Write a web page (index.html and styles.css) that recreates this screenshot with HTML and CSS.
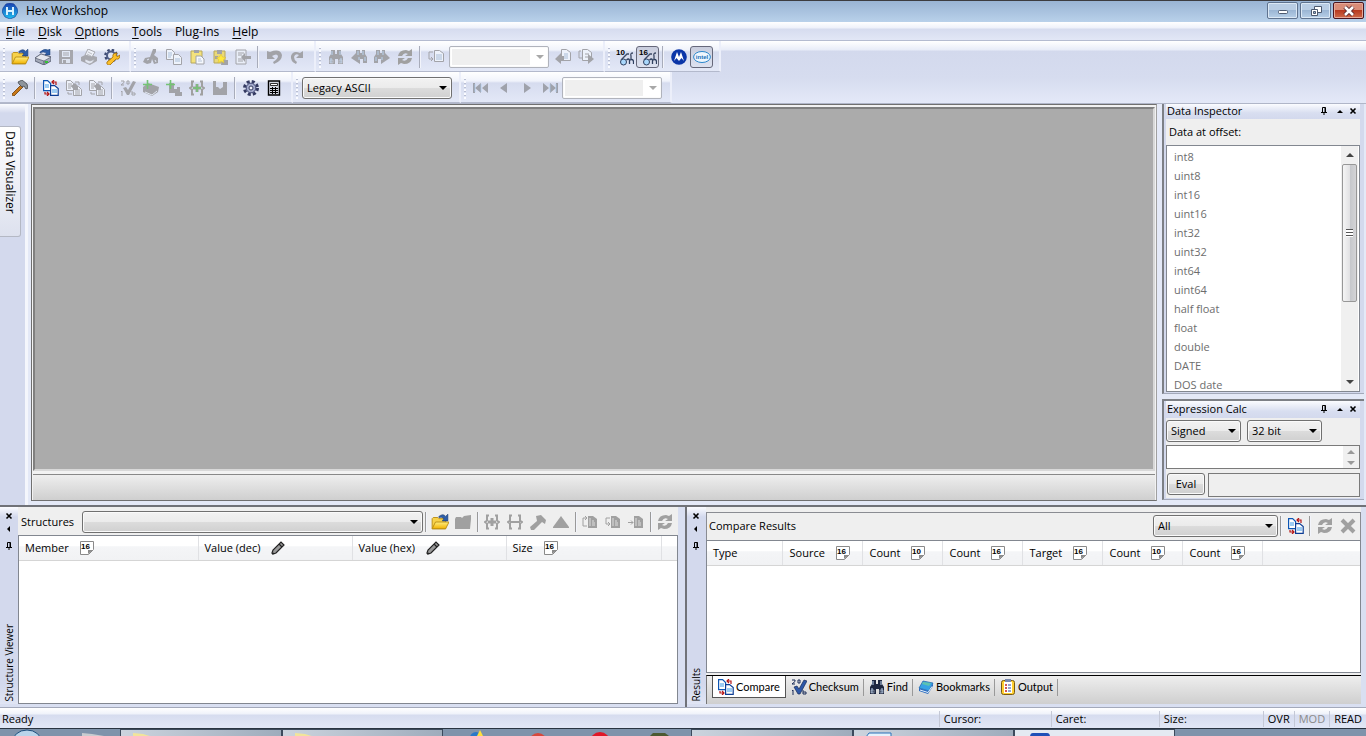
FILE: index.html
```html
<!DOCTYPE html>
<html lang="en">
<head>
<meta charset="utf-8">
<title>Hex Workshop</title>
<link rel="stylesheet" href="styles.css">
</head>
<body>
<svg class="sprite" aria-hidden="true">
  <defs>
    <linearGradient id="gold" x1="0" y1="0" x2="0" y2="1"><stop offset="0" stop-color="#ffee80"/><stop offset="1" stop-color="#f2b200"/></linearGradient>
    <linearGradient id="orb" x1="0" y1="0" x2="0" y2="1"><stop offset="0" stop-color="#1a3fb0"/><stop offset="1" stop-color="#1fc0f0"/></linearGradient>
  </defs>
  <symbol id="i-logo" viewBox="0 0 16 16"><path d="M4 1l4-1 4 1 3 4 1 4-3 5-5 2-5-2-3-5 1-4z" fill="url(#orb)" stroke="#123a94" stroke-width=".6"/><path d="M5 4v8M11 4v8M5 8h6" stroke="#d8f2ff" stroke-width="2" fill="none"/></symbol>
  <symbol id="i-open" viewBox="0 0 16 16"><path d="M1 5l1-1h4l1 1h6v9H1z" fill="#f7d24a" stroke="#b88a10" stroke-width=".8"/><path d="M1 14l3-6h12l-3 6z" fill="url(#gold)" stroke="#b88a10" stroke-width=".8"/><path d="M7 3q4-3 6 0l2-2v6h-5l1.500-2Q10 3 7 4z" fill="#2f5fa8" stroke="#17386e" stroke-width=".5"/></symbol>
  <symbol id="i-disk" viewBox="0 0 16 16"><path d="M0 9l6-4 10 3v4l-7 4-9-4z" fill="#a3a9b8" stroke="#4c5368" stroke-width=".8"/><path d="M0 9l9 3 7-4-10-3z" fill="#e4e7ee" stroke="#565d70" stroke-width=".7"/><path d="M9 12v4" stroke="#565d70"/><rect x="10" y="12" width="3" height="2" fill="#35c435"/><path d="M5 3q4-4 8-2l2-1v6h-5l1.500-2Q8 2 5 4z" fill="#2f5fa8" stroke="#17386e" stroke-width=".5"/></symbol>
  <symbol id="i-save" viewBox="0 0 16 16"><path d="M1 1h14v14H1z" fill="#a6a7ad"/><path d="M4 2h8v6H4z" fill="#e2e9f6"/><path d="M5 4h6M5 6h6" stroke="#a6a7ad"/><path d="M4 10h8v4H4z" fill="#dce2ee"/><path d="M5 11h3v3H5z" fill="#a6a7ad"/></symbol>
  <symbol id="i-print" viewBox="0 0 16 16"><path d="M0 8l6-3 10 3v4l-7 4-9-4z" fill="#a6a7ad"/><path d="M4 6l3-6 7 3-3 5z" fill="#eef1f8" stroke="#a6a7ad"/><path d="M7 3l4 2M6 5l4 2" stroke="#a6a7ad" stroke-width=".7"/><path d="M4 10l5 2 5-2-3 4-3 1-4-2z" fill="#e3e7f1" stroke="#a6a7ad" stroke-width=".7"/></symbol>
  <symbol id="i-prefs" viewBox="0 0 16 16"><circle cx="7" cy="6.500" r="5.600" fill="none" stroke="#3c4a72" stroke-width="2.400" stroke-dasharray="2.400 2"/><circle cx="7" cy="6.500" r="4" fill="#dfe5f2" stroke="#4d5b84" stroke-width="2"/><path d="M3 13l6-5q-1-4 4-4l-1 2.500 1.500 1L16 6q0 5-4 4l-6 6q-4 0-3-3z" fill="#fbc02a" stroke="#a36c00" stroke-width=".8"/></symbol>
  <symbol id="i-cut" viewBox="0 0 16 16"><path d="M10 0h3v3l-2 3 4 3v5l-4 1-2-5-1 4-4 1-4-2 2-4 5-1z" fill="#a2a3a8"/><path d="M4 11l2-1M12 11l1 2" stroke="#e0e6f4"/></symbol>
  <symbol id="i-copy" viewBox="0 0 16 16"><path d="M.5.500h5l3 3v7h-8z" fill="#eef3fb" stroke="#a2a3a8"/><path d="M2 4h4M2 6h4M2 8h3" stroke="#a9bfd9"/><path d="M7.500 5.500h5l3 3v7h-8z" fill="#eef3fb" stroke="#a2a3a8"/><path d="M9 10h5M9 12h5" stroke="#a9bfd9"/></symbol>
  <symbol id="i-paste" viewBox="0 0 16 16"><path d="M2 2h11v12H2z" fill="#f4e27c" stroke="#b6a75c"/><path d="M5 1h5v3H5z" fill="#a2a3a8"/><path d="M7 7h5l3 3v5H7z" fill="#f5f8fd" stroke="#a2a3a8"/><path d="M9 10h3M9 12h4" stroke="#b8c4d8"/></symbol>
  <symbol id="i-pastesp" viewBox="0 0 16 16"><path d="M2 2h11v12H2z" fill="#ead978" stroke="#b6a75c"/><path d="M5 1h5v4H5zM3 7h3v3H3zM10 11h6v5H9z" fill="#a2a3a8"/><path d="M9 5l1.500 3 3.500.5-2.500 2 .5 3.500-3-2-3 2 .7-3.500L4 8.500 7.500 8z" fill="#ffe83c" stroke="#d2b63c" stroke-width=".5"/></symbol>
  <symbol id="i-export" viewBox="0 0 16 16"><path d="M1 1h10v14H1z" fill="#e9eef8" stroke="#a2a3a8"/><path d="M3 4h6M3 6h4M3 10h5M3 12h5" stroke="#a2a3a8"/><path d="M6 8l4-4v3h6v3h-6v3z" fill="#a2a3a8"/></symbol>
  <symbol id="i-undo" viewBox="0 0 16 16"><path d="M1 2v8h8L6 7q5-3 6 0 0 3-5 6l1 2q8-3 8-9-2-7-12-3z" fill="#a2a3a8"/></symbol>
  <symbol id="i-redo" viewBox="0 0 16 16"><path d="M14 2v7H7l3-3Q6 4 5 8q0 3 3 5l-1 2Q1 12 2 7q2-6 9-3z" fill="#a2a3a8"/></symbol>
  <symbol id="i-find" viewBox="0 0 16 16"><path d="M3 1h4v4h2V1h4v4l2 3v7h-5v-5H7v5H1V8l2-3z" fill="currentColor"/><path d="M4 2v4M12 2v4M3 9v5M13 9v5" stroke="#b9d3ef"/><path d="M2 11h3v3H2zM11 11h3v3h-3z" fill="none" stroke="#d5e0f0" stroke-width=".5"/></symbol>
  <symbol id="i-findprev" viewBox="0 0 16 16"><path d="M0 9l5-5V1h4v3h2V1h3v4l2 3v6h-4v-4H9v5z" fill="#a2a3a8"/><path d="M7 2v4M12 2v4M14 8v4M8 8v3" stroke="#b9d3ef"/></symbol>
  <symbol id="i-findnext" viewBox="0 0 16 16"><path d="M16 9l-5-5V1H8v3H6V1H2v4L0 8v6h4v-4h3v5z" fill="#a2a3a8"/><path d="M4 2v4M9 2v4M2 8v4M8 8v3" stroke="#b9d3ef"/></symbol>
  <symbol id="i-refresh" viewBox="0 0 16 16"><path d="M1 7q1-6 8-6l3 1 3-2v7H8l3-2Q7 3 5 7zM15 9q-1 6-8 6l-3-1-3 2V9h7l-3 2q4 2 6-2z" fill="#a0a0a0"/></symbol>
  <symbol id="i-pageleft" viewBox="0 0 16 16"><path d="M6.500 1.500h5l4 3v8h-9z" fill="#edf2fb" stroke="#a2a3a8"/><path d="M8 6h6M8 8h6M8 10h6" stroke="#a8bcd6"/><path d="M5 3H1v7h4M3 8l2 2-2 2" fill="none" stroke="#a2a3a8"/></symbol>
  <symbol id="i-pageprev" viewBox="0 0 16 16"><path d="M6.500.500h5l4 3v8h-9z" fill="#edf2fb" stroke="#a2a3a8"/><path d="M9 5h4M9 7h4M9 9h4" stroke="#a8bcd6"/><path d="M0 10l6-6v3h3v5H6v3z" fill="#a2a3a8"/></symbol>
  <symbol id="i-pagenext" viewBox="0 0 16 16"><path d="M4.500.500h5l4 3v8h-9z" fill="#edf2fb" stroke="#a2a3a8"/><path d="M3 2H1v7h3M7 5h4M7 8h3" stroke="#a2a3a8" fill="none"/><path d="M10 5l6 5-6 5z" fill="#a2a3a8"/></symbol>
  <symbol id="glasses" viewBox="0 0 18 18"><path d="M5 12l6-6h2M17 5q-3 0-2 3v3" fill="none" stroke="#3d4a66" stroke-width="1.300"/><circle cx="7.500" cy="14" r="3" fill="#a9d7fb" stroke="#2f405f"/><path d="M10.500 12q2-2 3 0v4M14 12q4-2 3.500 4" fill="none" stroke="#2f405f" stroke-width="1.300"/></symbol>
  <symbol id="i-moto" viewBox="0 0 16 16"><circle cx="8" cy="8" r="7.800" fill="#0a35a8"/><path d="M3 12L6 3l2 5 2-5 3 9-2.500-3L8 12 5.500 9z" fill="#fff"/></symbol>
  <symbol id="i-hammer" viewBox="0 0 16 16"><path d="M0 14L9 5l2 2-9 9q-2 0-2-2z" fill="#c87818" stroke="#6e3c04" stroke-width=".8"/><path d="M6 2l4-2 5 4 1 4-2 1-2-3-2 1-3-3z" fill="#8d949c" stroke="#42474e" stroke-width=".8"/></symbol>
  <symbol id="i-hammerg" viewBox="0 0 16 16"><path d="M0 13l7-6-1-5 5-1 5 5-1 4-3-2-8 8H1z" fill="#a0a0a0"/></symbol>
  <symbol id="i-compare" viewBox="0 0 16 16"><path d="M.6.600h4l3 3v7h-7z" fill="#fff" stroke="#0c55b4" stroke-width="1.200"/><path d="M2 5h4M2 7h4" stroke="#3c9ae8"/><path d="M7.600 5.600h4l3.600 3v6.800H7.600z" fill="#fff" stroke="#0c3c94" stroke-width="1.200"/><path d="M9 10h5M9 12h5" stroke="#3c9ae8"/><path d="M9 2h4v3M11 0L9 2l2 2M2 12v2h4M4 12l2 2-2 2" fill="none" stroke="#b41616" stroke-width="1.200"/></symbol>
  <symbol id="i-compareg" viewBox="0 0 16 16"><path d="M.5.500h4l3 3v7h-7z" fill="#edf1fa" stroke="#a2a3a8"/><path d="M2 4h4M2 6h4M2 8h3" stroke="#a2a3a8"/><path d="M7.500 6.500h5l3 3v6h-8z" fill="#edf1fa" stroke="#a2a3a8"/><path d="M9 10h5M9 12h5M9 14h5M9 2h4v3M2 12v2h4" fill="none" stroke="#a2a3a8"/><path d="M5 6l4-3 3 3v4H8z" fill="#a2a3a8"/></symbol>
  <symbol id="i-check" viewBox="0 0 16 16"><path d="M3 8l3-1 2 3 5-9 3 1-7 13H7z" fill="#2d58a8" stroke="#1a2c58" stroke-width=".7"/><path d="M1 1h3v1.500L1 5h3M7 1h2v3H7zM1 12l1-1v5M12 11v4h3v-2h-3" fill="none" stroke="#1a2c58" stroke-width="1"/></symbol>
  <symbol id="i-checkg" viewBox="0 0 16 16"><path d="M3 8l3-1 2 3 5-9 3 1-7 13H7z" fill="#a2a3a8"/><path d="M1 1h3v1.500L1 5h3M7 1h2v3H7zM1 12l1-1v5M12 11v4h3v-2h-3" fill="none" stroke="#a2a3a8"/></symbol>
  <symbol id="i-bookadd" viewBox="0 0 16 16"><path d="M0 7l5-4 11 4-1 5-6 4-9-4z" fill="#a2a3a8"/><path d="M2 12l7 3 5-4" fill="none" stroke="#e2e8f4"/><path d="M4.500 0v9M0 4.500h9" stroke="#74c474" stroke-width="1.600"/></symbol>
  <symbol id="i-structadd" viewBox="0 0 16 16"><path d="M3 3h5v6h3V7h3v5h2v4H9v-3H3z" fill="#a2a3a8"/><path d="M4.500 0v9M0 4.500h9" stroke="#74c474" stroke-width="1.600"/></symbol>
  <symbol id="i-brace" viewBox="0 0 16 16"><path d="M5 1.500H3v5L1 8l2 1.500v5h2M11 1.500h2v5L15 8l-2 1.500v5h-2" fill="none" stroke="#a0a0a0" stroke-width="2"/><path d="M4 8h8M8 4v8" stroke="#a0a0a0" stroke-width="3"/></symbol>
  <symbol id="i-bracegreen" viewBox="0 0 16 16"><path d="M5 1.500H3v5L1 8l2 1.500v5h2M11 1.500h2v5L15 8l-2 1.500v5h-2" fill="none" stroke="#a0a0a0" stroke-width="2"/><path d="M4 8h8M8 4v8" stroke="#a0a0a0" stroke-width="3"/><path d="M8 4v8M4 8h8" stroke="#74c474" stroke-width="1.400"/></symbol>
  <symbol id="i-braceminus" viewBox="0 0 16 16"><path d="M5 1.500H3v5L1 8l2 1.500v5h2M11 1.500h2v5L15 8l-2 1.500v5h-2M3 8h10" fill="none" stroke="#a0a0a0" stroke-width="2"/></symbol>
  <symbol id="i-chart" viewBox="0 0 16 16"><path d="M1 1h3v6h2l2 2 3-2V2h4v13H1z" fill="#a2a3a8"/></symbol>
  <symbol id="i-gear" viewBox="0 0 16 16"><circle cx="8" cy="8" r="6.500" fill="none" stroke="#353b62" stroke-width="3" stroke-dasharray="3 2.100"/><circle cx="8" cy="8" r="4.800" fill="#a3aacb" stroke="#454c78" stroke-width="1"/><circle cx="8" cy="8" r="2" fill="#f4f6fc" stroke="#353b62"/></symbol>
  <symbol id="i-calc" viewBox="0 0 16 16"><path d="M2.500 1h11v14h-11z" fill="#d5d8e2" stroke="#000" stroke-width="1.400"/><path d="M4.500 3.500h7v2h-7z" fill="#fff" stroke="#000" stroke-width=".8"/><path d="M4 8.500h8M4 10.500h8M4 12.500h8M6.500 7v7M9.500 7v7" stroke="#000" stroke-width="1"/></symbol>
  <symbol id="i-first" viewBox="0 0 16 12"><path d="M0 1h2v10H0zM2 6l6-5v10zM9 6l6-5v10z" fill="#9fa2ab"/><path d="M2 2v8M8 2v8" stroke="#a9c8ea" stroke-width=".7"/></symbol>
  <symbol id="i-prev" viewBox="0 0 16 12"><path d="M4 6l7-5v10z" fill="#9fa2ab"/></symbol>
  <symbol id="i-next" viewBox="0 0 16 12"><path d="M12 6L5 1v10z" fill="#9fa2ab"/></symbol>
  <symbol id="i-last" viewBox="0 0 16 12"><path d="M14 1h2v10h-2zM14 6L8 1v10zM7 6L1 1v10z" fill="#9fa2ab"/><path d="M14 2v8M8 2v8" stroke="#a9c8ea" stroke-width=".7"/></symbol>
  <symbol id="i-folderg" viewBox="0 0 16 16"><path d="M0 5l1-2h5l1 1 2-2 7-1v4l-1 10H0z" fill="#a0a0a0"/></symbol>
  <symbol id="i-up" viewBox="0 0 16 16"><path d="M8 2l8 11v1H0v-1z" fill="#a0a0a0"/></symbol>
  <symbol id="i-pg1" viewBox="0 0 16 16"><path d="M6 2h5l4 3v9H6z" fill="#a0a0a0"/><path d="M8 4v8M10 7h2M10 9h3M10 11h3" stroke="#efefef" stroke-width=".8" fill="none"/><path d="M5 12H1V4h4M3 2l2 2-2 2" fill="none" stroke="#a0a0a0"/></symbol>
  <symbol id="i-pg2" viewBox="0 0 16 16"><path d="M6 2h5l4 3v9H6z" fill="#a0a0a0"/><path d="M8 4v8M10 7h2M10 9h3M10 11h3" stroke="#efefef" stroke-width=".8" fill="none"/><path d="M5 4H1v6h4M3 8l2 2-2 2" fill="none" stroke="#a0a0a0"/></symbol>
  <symbol id="i-pg3" viewBox="0 0 16 16"><path d="M6 2h5l4 3v9H6z" fill="#a0a0a0"/><path d="M8 4v8M10 7h2M10 9h3M10 11h3" stroke="#efefef" stroke-width=".8" fill="none"/><path d="M0 8.500h5M3 6.500l2 2-2 2" fill="none" stroke="#a0a0a0"/></symbol>
  <symbol id="i-cross" viewBox="0 0 16 16"><path d="M2 2l12 12M14 2L2 14" stroke="#a0a0a0" stroke-width="4"/></symbol>
  <symbol id="i-pencil" viewBox="0 0 14 14"><path d="M1 12l1-3 8-8 3 3-8 8-3 1z" fill="#999" stroke="#222" stroke-width="1.200"/><path d="M8 3l3 3M1 13l2-1" stroke="#222" stroke-width="1.200"/></symbol>
  <symbol id="i-page" viewBox="0 0 14 14"><path d="M.5.500h13v8l-5 5h-8z" fill="#fff" stroke="#8a8a8a"/><path d="M8 13V9h5z" fill="#8a8a8a"/></symbol>
  <symbol id="i-book" viewBox="0 0 16 16"><path d="M1 9l4-7 10 2-4 8z" fill="#37a2e4" stroke="#1b62a8" stroke-width=".7"/><path d="M1 9v3l9 3 5-8V4l-4 8z" fill="#2b6cc0"/><path d="M2 11l8 2.500 4-6" fill="none" stroke="#e8f2fb"/><path d="M5 3l8 1-2 3-7-2z" fill="#5cc3b0"/></symbol>
  <symbol id="i-output" viewBox="0 0 16 16"><rect x="1.500" y="1.500" width="13" height="14" rx="2" fill="#ffcf30" stroke="#7a5a10"/><path d="M4 3h8v11H4z" fill="#fff"/><path d="M5 0h6v3H5z" fill="#7a8ab0"/><path d="M5 6h2M5 9h2M5 12h2" stroke="#c02020" stroke-width="1.500"/><path d="M8 6h3M8 9h3M8 12h3" stroke="#2a4aa0"/></symbol>
  <symbol id="g-x" viewBox="0 0 8 8"><path d="M1.500 1.500l5 5M6.500 1.500l-5 5" stroke="#000" stroke-width="1.600"/></symbol>
  <symbol id="g-up" viewBox="0 0 8 8"><path d="M1 6l3-3 3 3z" fill="#000"/></symbol>
  <symbol id="g-left" viewBox="0 0 8 8"><path d="M2 4l3-3v6z" fill="#000"/></symbol>
  <symbol id="g-pin" viewBox="0 0 8 8"><path d="M2.500 5V.5h3V5M5 .5V5M1 5.500h6M4 5v3" fill="none" stroke="#000" stroke-width="1"/></symbol>
</svg>

<div class="app">
  <header class="title">
    <svg class="ic"><use href="#i-logo"/></svg><h1>Hex Workshop</h1>
    <div class="wins">
      <button class="win" aria-label="Minimize"><svg width="12" height="12"><rect x="1.500" y="5.500" width="9" height="3" rx="1" fill="#fff" stroke="#4d5a70"/></svg></button>
      <button class="win" aria-label="Restore"><svg width="12" height="12"><path d="M4.500 1.500h7v6h-7z" fill="#fff" stroke="#4d5a70"/><path d="M1.500 4.500h6v6h-6z" fill="#fff" stroke="#4d5a70"/><path d="M3.500 6.500h2v2h-2z" fill="#9bb6d4" stroke="#4d5a70"/></svg></button>
      <button class="win close" aria-label="Close"><svg width="12" height="12"><path d="M2 2l8 8M10 2l-8 8" stroke="#5a2a30" stroke-width="4.500"/><path d="M2 2l8 8M10 2l-8 8" stroke="#fff" stroke-width="2.500"/></svg></button>
    </div>
  </header>
  <nav class="menu">
    <button><u>F</u>ile</button><button><u>D</u>isk</button><button><u>O</u>ptions</button><button><u>T</u>ools</button><button>Plug-Ins</button><button><u>H</u>elp</button>
  </nav>
  <div class="bars">
    <div class="row">
      <div class="group"><i class="grip"></i>
        <button class="tb" aria-label="Open"><svg class="ic big"><use href="#i-open"/></svg></button>
        <button class="tb" aria-label="Open drive"><svg class="ic"><use href="#i-disk"/></svg></button>
        <button class="tb" aria-label="Save"><svg class="ic"><use href="#i-save"/></svg></button>
        <button class="tb" aria-label="Print"><svg class="ic"><use href="#i-print"/></svg></button>
        <button class="tb" aria-label="Preferences"><svg class="ic"><use href="#i-prefs"/></svg></button>
      </div>
      <div class="group"><i class="grip"></i>
        <button class="tb" aria-label="Cut"><svg class="ic"><use href="#i-cut"/></svg></button>
        <button class="tb" aria-label="Copy"><svg class="ic"><use href="#i-copy"/></svg></button>
        <button class="tb" aria-label="Paste"><svg class="ic"><use href="#i-paste"/></svg></button>
        <button class="tb" aria-label="Paste special"><svg class="ic"><use href="#i-pastesp"/></svg></button>
        <button class="tb" aria-label="Export"><svg class="ic"><use href="#i-export"/></svg></button>
        <i class="sep"></i>
        <button class="tb" aria-label="Undo"><svg class="ic"><use href="#i-undo"/></svg></button>
        <button class="tb" aria-label="Redo"><svg class="ic"><use href="#i-redo"/></svg></button>
      </div>
      <div class="group"><i class="grip"></i>
        <button class="tb off" aria-label="Find"><svg class="ic"><use href="#i-find"/></svg></button>
        <button class="tb" aria-label="Find previous"><svg class="ic"><use href="#i-findprev"/></svg></button>
        <button class="tb" aria-label="Find next"><svg class="ic"><use href="#i-findnext"/></svg></button>
        <button class="tb" aria-label="Replace"><svg class="ic"><use href="#i-refresh"/></svg></button>
        <i class="sep"></i>
        <button class="tb" aria-label="Go to"><svg class="ic"><use href="#i-pageleft"/></svg></button>
        <span class="combo dead w100"><select aria-label="Go to offset" disabled></select></span>
        <button class="tb" aria-label="Go to previous"><svg class="ic"><use href="#i-pageprev"/></svg></button>
        <button class="tb" aria-label="Go to next"><svg class="ic"><use href="#i-pagenext"/></svg></button>
      </div>
      <div class="group"><i class="grip"></i>
        <button class="tb" aria-label="Decimal"><svg class="ic wide"><use href="#glasses"/><text class="base" x="0" y="7">10</text></svg></button>
        <button class="tb on" aria-label="Hexadecimal"><svg class="ic wide"><use href="#glasses"/><text class="base" x="0" y="7">16</text></svg></button>
        <i class="sep"></i>
        <button class="tb" aria-label="Motorola byte order"><svg class="ic"><use href="#i-moto"/></svg></button>
        <button class="tb on" aria-label="Intel byte order"><svg class="ic wide" viewBox="0 0 18 18"><ellipse cx="9" cy="9" rx="8.400" ry="5.500" fill="#eef6fd" stroke="#2a86cc"/><text class="intel" x="9" y="11" text-anchor="middle">intel</text></svg></button>
      </div>
    </div>
    <div class="row">
      <div class="group"><i class="grip"></i>
        <button class="tb" aria-label="Tools"><svg class="ic"><use href="#i-hammer"/></svg></button>
        <i class="sep"></i>
        <button class="tb" aria-label="Compare files"><svg class="ic"><use href="#i-compare"/></svg></button>
        <button class="tb" aria-label="Previous difference"><svg class="ic"><use href="#i-compareg"/></svg></button>
        <button class="tb" aria-label="Next difference"><svg class="ic"><use href="#i-compareg"/></svg></button>
        <i class="sep"></i>
        <button class="tb" aria-label="Checksum"><svg class="ic"><use href="#i-checkg"/></svg></button>
        <button class="tb" aria-label="Add bookmark"><svg class="ic"><use href="#i-bookadd"/></svg></button>
        <button class="tb" aria-label="Add color map"><svg class="ic"><use href="#i-structadd"/></svg></button>
        <button class="tb" aria-label="Add structure"><svg class="ic"><use href="#i-bracegreen"/></svg></button>
        <button class="tb" aria-label="Distribution"><svg class="ic"><use href="#i-chart"/></svg></button>
        <i class="sep"></i>
        <button class="tb" aria-label="Settings"><svg class="ic"><use href="#i-gear"/></svg></button>
        <button class="tb" aria-label="Calculator"><svg class="ic"><use href="#i-calc"/></svg></button>
      </div>
      <div class="group"><i class="grip"></i>
        <span class="combo w150"><select aria-label="Character set"><option>Legacy ASCII</option></select></span>
      </div>
      <div class="group"><i class="grip"></i>
        <button class="tb" aria-label="First"><svg class="ic"><use href="#i-first"/></svg></button>
        <button class="tb" aria-label="Previous"><svg class="ic"><use href="#i-prev"/></svg></button>
        <button class="tb" aria-label="Next"><svg class="ic"><use href="#i-next"/></svg></button>
        <button class="tb" aria-label="Last"><svg class="ic"><use href="#i-last"/></svg></button>
        <span class="combo dead w100"><select aria-label="Record" disabled></select></span>
      </div>
    </div>
  </div>

  <main class="work">
    <aside class="strip"><button class="vtab">Data Visualizer</button></aside>
    <section class="doc"><div class="mdi"></div><div class="doctabs"></div></section>
    <aside class="right">
      <section class="panel grow">
        <div class="cap"><h2>Data Inspector</h2><button aria-label="Pin"><svg><use href="#g-pin"/></svg></button><button aria-label="Collapse"><svg><use href="#g-up"/></svg></button><button aria-label="Close"><svg><use href="#g-x"/></svg></button></div>
        <div class="inspect">
          <p>Data at offset:</p>
          <div class="listbox">
            <ul><li>int8</li><li>uint8</li><li>int16</li><li>uint16</li><li>int32</li><li>uint32</li><li>int64</li><li>uint64</li><li>half float</li><li>float</li><li>double</li><li>DATE</li><li>DOS date</li></ul>
            <div class="scroll"><i class="tri up"></i><div class="track"><div class="thumb"><i class="lines"></i></div></div><i class="tri down"></i></div>
          </div>
        </div>
      </section>
      <section class="panel">
        <div class="cap calc"><h2>Expression Calc</h2><button aria-label="Pin"><svg><use href="#g-pin"/></svg></button><button aria-label="Collapse"><svg><use href="#g-up"/></svg></button><button aria-label="Close"><svg><use href="#g-x"/></svg></button></div>
        <div class="expr">
          <div class="line"><span class="combo w75"><select aria-label="Sign"><option>Signed</option></select></span><span class="combo w75"><select aria-label="Width"><option>32 bit</option></select></span></div>
          <div class="edit"><input type="text" aria-label="Expression"><div class="spin"><i class="tri up"></i><i class="tri down"></i></div></div>
          <div class="line tight"><button class="eval">Eval</button><input class="result" type="text" aria-label="Result" readonly></div>
        </div>
      </section>
    </aside>
  </main>

  <div class="bottom">
    <section class="dock left">
      <div class="side"><button aria-label="Close"><svg><use href="#g-x"/></svg></button><button aria-label="Collapse"><svg><use href="#g-left"/></svg></button><button aria-label="Pin"><svg><use href="#g-pin"/></svg></button><span>Structure Viewer</span></div>
      <div class="body">
        <div class="tools">
          <label for="structs">Structures</label>
          <span class="combo fill"><select id="structs"></select></span>
          <i class="sep"></i>
          <button class="tb" aria-label="Open structure"><svg class="ic big"><use href="#i-open"/></svg></button>
          <button class="tb" aria-label="Close structure"><svg class="ic"><use href="#i-folderg"/></svg></button>
          <i class="sep"></i>
          <button class="tb" aria-label="Add structure"><svg class="ic"><use href="#i-brace"/></svg></button>
          <button class="tb" aria-label="Remove structure"><svg class="ic"><use href="#i-braceminus"/></svg></button>
          <button class="tb" aria-label="Build"><svg class="ic"><use href="#i-hammerg"/></svg></button>
          <button class="tb" aria-label="Delta"><svg class="ic"><use href="#i-up"/></svg></button>
          <i class="sep"></i>
          <button class="tb" aria-label="Move back"><svg class="ic"><use href="#i-pg1"/></svg></button>
          <button class="tb" aria-label="Move on"><svg class="ic"><use href="#i-pg2"/></svg></button>
          <button class="tb" aria-label="Move to"><svg class="ic"><use href="#i-pg3"/></svg></button>
          <i class="sep"></i>
          <button class="tb" aria-label="Refresh"><svg class="ic"><use href="#i-refresh"/></svg></button>
        </div>
        <div class="sheet">
          <table>
            <colgroup><col class="c-179"><col class="c-154"><col class="c-154"><col class="c-155"><col></colgroup>
            <thead><tr><th><span>Member<svg><use href="#i-page"/><text class="base" x="1" y="8">16</text></svg></span></th><th><span>Value (dec)<svg><use href="#i-pencil"/></svg></span></th><th><span>Value (hex)<svg><use href="#i-pencil"/></svg></span></th><th><span>Size<svg><use href="#i-page"/><text class="base" x="1" y="8">16</text></svg></span></th><th></th></tr></thead>
          </table>
        </div>
      </div>
    </section>
    <section class="dock results">
      <div class="side"><button aria-label="Close"><svg><use href="#g-x"/></svg></button><button aria-label="Collapse"><svg><use href="#g-left"/></svg></button><button aria-label="Pin"><svg><use href="#g-pin"/></svg></button><span>Results</span></div>
      <div class="body">
        <div class="tools head">
          <h2>Compare Results</h2>
          <span class="combo w125"><select aria-label="Filter"><option>All</option></select></span>
          <i class="sep"></i>
          <button class="tb" aria-label="Compare files"><svg class="ic"><use href="#i-compare"/></svg></button>
          <i class="sep"></i>
          <button class="tb" aria-label="Refresh"><svg class="ic"><use href="#i-refresh"/></svg></button>
          <button class="tb" aria-label="Clear"><svg class="ic"><use href="#i-cross"/></svg></button>
        </div>
        <div class="sheet">
          <table>
            <colgroup><col class="c-75"><col class="c-80"><col class="c-80"><col class="c-80"><col class="c-80"><col class="c-80"><col class="c-80"><col></colgroup>
            <thead><tr><th>Type</th><th><span>Source<svg><use href="#i-page"/><text class="base" x="1" y="8">16</text></svg></span></th><th><span>Count<svg><use href="#i-page"/><text class="base" x="1" y="8">10</text></svg></span></th><th><span>Count<svg><use href="#i-page"/><text class="base" x="1" y="8">16</text></svg></span></th><th><span>Target<svg><use href="#i-page"/><text class="base" x="1" y="8">16</text></svg></span></th><th><span>Count<svg><use href="#i-page"/><text class="base" x="1" y="8">10</text></svg></span></th><th><span>Count<svg><use href="#i-page"/><text class="base" x="1" y="8">16</text></svg></span></th><th></th></tr></thead>
          </table>
        </div>
        <div class="tabs">
          <button class="tab cur"><svg class="ic"><use href="#i-compare"/></svg>Compare</button><button class="tab"><svg class="ic"><use href="#i-check"/></svg>Checksum</button><button class="tab"><svg class="ic navy"><use href="#i-find"/></svg>Find</button><button class="tab"><svg class="ic"><use href="#i-book"/></svg>Bookmarks</button><button class="tab"><svg class="ic"><use href="#i-output"/></svg>Output</button>
        </div>
      </div>
    </section>
  </div>

  <footer class="status"><span class="ready">Ready</span><span class="w112">Cursor:</span><span class="w108">Caret:</span><span class="w104">Size:</span><span>OVR</span><span class="mod">MOD</span><span>READ</span></footer>
  <div class="taskbar">
    <div class="quick"><svg width="120" height="7"><ellipse cx="27" cy="14" rx="15" ry="13" fill="#b9d4ea" stroke="#1b4d7c"/><path d="M82 4l10 1 12 2H82z" fill="#c9ccd0"/></svg></div>
    <div class="task"><svg width="60" height="7"><path d="M12 3l10 1 10 3H12z" fill="#f2e49a"/></svg></div>
    <div class="task"><svg width="60" height="7"><path d="M12 3l10 1 10 3H12z" fill="#f2e49a"/></svg></div>
    <div class="quick pins"><svg width="250" height="7"><circle cx="33" cy="9" r="6" fill="#2a78c8"/><path d="M34 7l3-6 3 6z" fill="#ffe03c"/><circle cx="95" cy="13" r="9" fill="#d8483c"/><circle cx="157" cy="13" r="10" fill="#e01828"/><path d="M207 7l3-3h12l4 3z" fill="#4c5a32"/></svg></div>
    <div class="task"></div>
    <div class="task"><svg width="60" height="7"><path d="M12 7l3-4h22v4z" fill="#e6f2fc" stroke="#2a70b8"/></svg></div>
    <div class="task cur"><svg width="60" height="7"><path d="M15 7q0-4 3-4h14q3 0 3 4z" fill="#1e50b8"/></svg></div>
    <div class="desk"></div>
  </div>
</div>
</body>
</html>
```

FILE: styles.css
```css
* { box-sizing: border-box; }
body { margin: 0; font: 11px/16px "Open Sans", "Noto Sans", sans-serif; color: #000; }
h1, h2, p, ul { margin: 0; padding: 0; font: inherit; font-weight: normal; }
ul { list-style: none; }
button, select, input { font: inherit; color: inherit; margin: 0; padding: 0; border: 0; background: none; }
button, .combo { flex: none; }
.sprite { position: absolute; width: 0; height: 0; }
.base { font: bold 8px "Liberation Sans", sans-serif; }
.intel { font: bold 6px "Liberation Sans", sans-serif; fill: #1670b8; }
.app { display: flex; flex-direction: column; height: 100vh; overflow: hidden; background: #e4e9f7; }

.title { display: flex; align-items: center; flex: none; height: 22px; padding: 0 0 2px 2px; gap: 8px; border-top: 1px solid #3c3c40; background: linear-gradient(#99b4d4, #b9d1ea); }
.title h1 { flex: 1; font-size: 12px; }
.wins { display: flex; gap: 2px; padding: 1px 2px 0; align-self: flex-start; }
.win { display: flex; align-items: center; justify-content: center; width: 31px; height: 17px; border: 1px solid #5f738f; border-radius: 2px; box-shadow: inset 0 0 0 1px #dbe8f5; background: linear-gradient(#b9cde4 50%, #9bb6d4 50%, #b7cfe8); }
.win.close { border-color: #4b1520; box-shadow: inset 0 0 0 1px #e6a99a; background: linear-gradient(#d98c78 45%, #b83a20 50%, #cf6a4a); }

.menu { display: flex; flex: none; align-items: center; height: 19px; padding: 1px 0 0 6px; gap: 13px; border-bottom: 1px solid #b4bbd0; background: linear-gradient(#fff, #eef1fa 6px, #d6dcef 7px, #e2e7f6); }
.menu button { font-size: 12px; }
.menu u { text-underline-offset: 2px; }

.bars { flex: none; display: flex; flex-direction: column; border-bottom: 1px solid #b0b6c8; background: linear-gradient(#fff, #e8ecf8 9px, #d3d9ed 10px, #d6dcef 60%, #e4e9f8); }
.row { display: flex; height: 31px; }
.group { display: flex; align-items: center; height: 31px; padding: 1px 6px 0 3px; border-right: 2px solid #eceffa; border-bottom: 1px solid #b3b9cc; background: linear-gradient(#fff, #f0f3fb 9px, #d6dcef 11px, #e3e8f7); }
.grip { width: 2px; height: 22px; margin-right: 3px; background: repeating-linear-gradient(#fafbff 0 2px, #b9bfd2 2px 3px, transparent 3px 4px); }
.tb { display: flex; align-items: center; justify-content: center; width: 23px; height: 22px; }
.tb.on { border: 1px solid #66687a; border-radius: 3px; background: linear-gradient(#c9cddd, #dde2f0); }
.off { color: #a2a3a8; }
.navy { color: #1e2740; }
.ic { width: 16px; height: 16px; flex: none; }
.big, .wide { width: 18px; height: 18px; }
.sep { flex: none; width: 2px; height: 22px; margin: 0 3px; border-left: 1px solid #a8acba; border-right: 1px solid #f2f4fb; }

.combo { position: relative; display: flex; height: 22px; border: 1px solid #707070; border-radius: 3px; box-shadow: inset 0 0 0 1px #fafafa; background: linear-gradient(#f2f2f2, #ebebeb 50%, #dcdcdc 50%, #d0d0d0); }
.combo::after { content: ""; position: absolute; right: 4px; top: 8px; border: 4px solid transparent; border-top-color: #000; border-bottom: 0; pointer-events: none; }
.combo select { appearance: none; width: 100%; padding-left: 4px; outline: 0; }
.dead { margin: 0 2px 0 1px; border-color: #b0b3bc; border-radius: 2px; background: linear-gradient(#efefef, #efefef) 2px 2px / 78px 16px no-repeat #fff; }
.group .sep + .tb + .dead { margin-left: 2px; }
.dead::after { border-top-color: #a8a8a8; }
.w75 { width: 75px; }
.w100 { width: 100px; }
.w125 { width: 125px; }
.w150 { width: 150px; margin: 0 1px; }
.fill { flex: 1; }

.work { display: flex; flex: 1; min-height: 0; }
.strip { width: 28px; flex: none; padding-top: 22px; border-right: 3px solid #f4f6fc; background: linear-gradient(#fbfcff, #d3d9ed 9px); }
.vtab { writing-mode: vertical-rl; width: 21px; height: 111px; padding: 4px 0; text-align: left; font-size: 12px; line-height: 19px; border: 1px solid #b4b8c4; border-left: 0; border-radius: 0 3px 3px 0; background: linear-gradient(#fff, #dde1ee); }
.doc { display: flex; flex: 1; flex-direction: column; gap: 3px; min-width: 0; margin: 0 0 4px 3px; padding: 2px 1px 0; border: 1px solid #707070; border-right-color: #a0a0a0; background: #f2f2f2; }
.mdi { flex: 1; border: 2px solid #808080; border-right-color: #d8d8d8; border-bottom-color: #d8d8d8; background: #ababab; }
.doctabs { height: 26px; border-top: 1px solid #888; background: linear-gradient(#eee, #cfcfcf); }

.right { display: flex; flex: none; flex-direction: column; width: 209px; padding: 0 2px 5px 5px; gap: 5px; }
.panel { display: flex; flex-direction: column; padding: 0 4px 1px 2px; border-left: 2px solid #7d8086; border-bottom: 1px solid #a3a9ba; background: #d3d9ed; }
.panel + .panel { border-top: 2px solid #7d8086; }
.grow { flex: 1; min-height: 0; }
.cap { display: flex; flex: none; align-items: center; height: 15px; padding: 0 3px 2px 1px; background: linear-gradient(#fbfcff, #d8def0 60%, #d3d9ed); }
.cap.calc { height: 17px; }
.cap h2 { flex: 1; }
.cap button { display: flex; align-items: center; justify-content: flex-end; width: 13px; height: 12px; }
.cap button:nth-of-type(2) { width: 16px; }
.cap svg, .side svg { display: block; width: 8px; height: 8px; }
.inspect, .expr { display: flex; flex-direction: column; min-height: 0; background: #efefef; }
.inspect { flex: 1; }
.inspect p { padding: 5px 3px; }
.listbox { display: flex; flex: 1; min-height: 0; border: 1px solid #828790; background: #fff; }
.listbox ul { flex: 1; overflow: hidden; padding: 1px 7px 0; color: #6d6d6d; }
.listbox li { line-height: 19px; }
.scroll { display: flex; flex-direction: column; align-items: center; width: 17px; margin-right: 1px; background: #f0f0f0; }
.tri { flex: none; border: 4px solid transparent; }
.tri.up { border-top: 0; border-bottom-color: #444; margin: 7px 0; }
.tri.down { border-bottom: 0; border-top-color: #444; margin: 7px 0; }
.track { flex: 1; width: 15px; }
.thumb { display: flex; align-items: center; justify-content: center; height: 66%; border: 1px solid #979797; border-radius: 2px; background: linear-gradient(90deg, #f5f5f5, #e2e2e4 50%, #c4c6ca 50%, #d4d4d6); }
.lines { width: 7px; height: 8px; background: repeating-linear-gradient(#555 0 1px, #fff 1px 3px); }
.expr { gap: 3px; padding: 2px 0 1px; }
.line { display: flex; gap: 6px; }
.tight { gap: 3px; padding: 1px 0 0 1px; }
.edit { display: flex; height: 24px; border: 1px solid #7a7a7a; background: #fff; }
.edit input { flex: 1; min-width: 0; outline: 0; }
.spin { display: flex; flex-direction: column; align-items: center; justify-content: space-around; width: 16px; background: #f0f0f0; }
.spin .tri { margin: 0; }
.spin .up { border-bottom-color: #999; }
.spin .down { border-top-color: #999; }
.eval { width: 38px; height: 22px; border: 1px solid #707070; border-radius: 3px; box-shadow: inset 0 0 0 1px #fafafa; background: linear-gradient(#f2f2f2, #ebebeb 50%, #dcdcdc 50%, #cfcfcf); line-height: 18px; }
.result { flex: 1; min-width: 0; height: 24px; border: 1px solid #7a7a7a; }

.bottom { display: flex; flex: none; height: 203px; border-top: 2px solid #707278; border-bottom: 1px solid #a3a9ba; background: #d9dff1; }
.dock { display: flex; min-width: 0; padding: 0 5px 3px 0; }
.dock.left { flex: 685; padding-right: 7px; border-right: 2px solid #707278; }
.dock.results { flex: 681; }
.side { display: flex; flex: none; flex-direction: column; align-items: center; gap: 5px; width: 18px; padding: 5px 0 2px; background: linear-gradient(#fbfcff, #d3d9ed 10px, #d3d9ed 90%, #e0e5f4); }
.side button:nth-of-type(3) { margin-top: 4px; }
.side span { margin-top: auto; writing-mode: vertical-rl; transform: rotate(180deg); font-size: 10px; line-height: 14px; }
.results .side { width: 19px; }
.body { display: flex; flex: 1; flex-direction: column; min-width: 0; background: #efefef; }
.tools { display: flex; flex: none; align-items: center; height: 28px; padding: 2px 1px 0 3px; }
.tools label { width: 61px; }
.tools .sep { height: 20px; margin: 0 2px; border-left-color: #999; }
.tools.head { height: 28px; margin-top: 5px; padding: 0 1px 2px 2px; border: 1px solid #8a8c92; border-bottom: 0; }
.head h2 { flex: 1; }
.sheet { flex: 1; min-height: 0; border: 1px solid #828790; background: #fff; }
table { width: 100%; table-layout: fixed; border-collapse: collapse; }
th { height: 24px; padding: 1px 0 0 6px; font-weight: normal; text-align: left; border-right: 1px solid #e0e1e4; border-bottom: 1px solid #d5d5d5; background: linear-gradient(#fff 40%, #f4f5f7 45%, #f1f2f4); }
th:last-child { border-right: 0; }
th span { display: flex; align-items: center; gap: 11px; }
th svg { width: 14px; height: 14px; }
.c-75 { width: 76px; }
.c-80 { width: 80px; }
.c-179 { width: 179px; }
.c-154 { width: 154px; }
.c-155 { width: 155px; }
.tabs { display: flex; flex: none; height: 29px; padding-left: 5px; margin-top: 2px; border-top: 1px solid #000; border-left: 1px solid #777; background: linear-gradient(#eee, #cfcfcf); }
.tab { display: flex; align-items: center; gap: 2px; height: 22px; padding: 0 5px; position: relative; font-family: Lato, sans-serif; }
.tab:not(.cur)::after { content: ""; position: absolute; right: 0; top: 3px; height: 17px; border-right: 1px solid #999; }
.tab.cur { border: 1px solid #555; border-top: 0; background: #fff; }

.status { display: flex; flex: none; align-items: center; height: 21px; padding: 2px 0 0 2px; border-bottom: 1px solid #2a3442; background: linear-gradient(#fff, #eff2fa 6px, #d6dcef 7px, #e2e7f6); }
.status span { padding: 0 4px; border-left: 1px solid #c4c8d6; }
.status .ready { flex: 1; padding: 0; border: 0; }
.w112 { width: 112px; }
.w108 { width: 108px; }
.w104 { width: 104px; }
.status .mod { color: #8a8a8a; }
.taskbar { display: flex; flex: none; height: 7px; background: #7f93ab; }
.taskbar svg { display: block; }
.quick { flex: 121; overflow: hidden; }
.pins { flex: 250; }
.task { flex: 160; min-width: 0; overflow: hidden; border: 1px solid #3c4a5c; border-bottom: 0; background: linear-gradient(90deg, #ccd4de, #9eacbc); }
.task.cur { background: #e4eaf2; }
.desk { flex: 192; }
```
